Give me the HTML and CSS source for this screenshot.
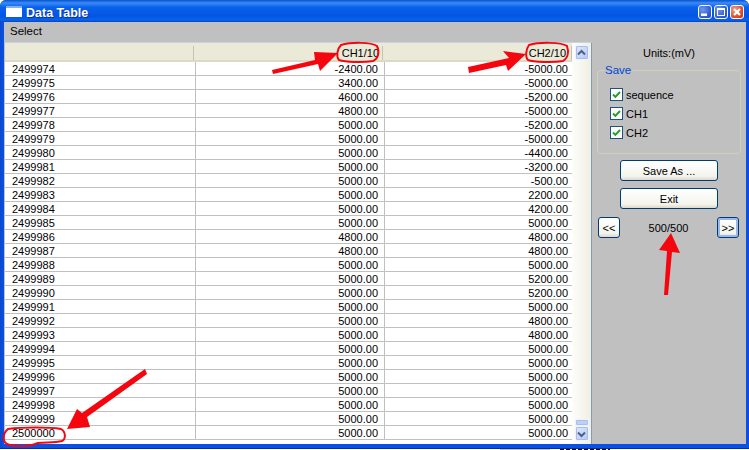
FILE: index.html
```html
<!DOCTYPE html>
<html lang="en">
<head>
<meta charset="utf-8">
<title>Data Table</title>
<link rel="stylesheet" href="styles.css">
</head>
<body>
<div class="window">
  <div class="titlebar">
    <svg class="appicon" width="16" height="11" viewBox="0 0 16 11"><rect x="0" y="0" width="16" height="11" fill="#fff"/><rect x="0" y="0" width="16" height="2" fill="#7fb0f0"/></svg>
    <span class="title">Data Table</span>
    <div class="winbtns">
      <span class="winbtn"><svg width="14" height="14" viewBox="0 0 14 14"><rect x="3" y="8.5" width="6" height="2.5" fill="#fff"/></svg></span>
      <span class="winbtn"><svg width="14" height="14" viewBox="0 0 14 14"><rect x="3.5" y="3.5" width="7" height="7" fill="none" stroke="#fff"/><rect x="3" y="3" width="8" height="2" fill="#fff"/></svg></span>
      <span class="winbtn close"><svg width="14" height="14" viewBox="0 0 14 14"><path d="M4 4l6 6M10 4l-6 6" stroke="#fff" stroke-width="2.2"/></svg></span>
    </div>
  </div>
  <div class="client">
    <div class="menubar">Select</div>
    <div class="main">
      <div class="tablewrap">
        <div class="grid" id="grid">
          <div class="head">
            <div class="hcell c1"></div>
            <div class="hcell c2">CH1/10</div>
            <div class="hcell c3">CH2/10</div>
          </div>
          <div class="row"><div class="c1">2499974</div><div class="c2">-2400.00</div><div class="c3">-5000.00</div></div>
          <div class="row"><div class="c1">2499975</div><div class="c2">3400.00</div><div class="c3">-5000.00</div></div>
          <div class="row"><div class="c1">2499976</div><div class="c2">4600.00</div><div class="c3">-5200.00</div></div>
          <div class="row"><div class="c1">2499977</div><div class="c2">4800.00</div><div class="c3">-5000.00</div></div>
          <div class="row"><div class="c1">2499978</div><div class="c2">5000.00</div><div class="c3">-5200.00</div></div>
          <div class="row"><div class="c1">2499979</div><div class="c2">5000.00</div><div class="c3">-5000.00</div></div>
          <div class="row"><div class="c1">2499980</div><div class="c2">5000.00</div><div class="c3">-4400.00</div></div>
          <div class="row"><div class="c1">2499981</div><div class="c2">5000.00</div><div class="c3">-3200.00</div></div>
          <div class="row"><div class="c1">2499982</div><div class="c2">5000.00</div><div class="c3">-500.00</div></div>
          <div class="row"><div class="c1">2499983</div><div class="c2">5000.00</div><div class="c3">2200.00</div></div>
          <div class="row"><div class="c1">2499984</div><div class="c2">5000.00</div><div class="c3">4200.00</div></div>
          <div class="row"><div class="c1">2499985</div><div class="c2">5000.00</div><div class="c3">5000.00</div></div>
          <div class="row"><div class="c1">2499986</div><div class="c2">4800.00</div><div class="c3">4800.00</div></div>
          <div class="row"><div class="c1">2499987</div><div class="c2">4800.00</div><div class="c3">4800.00</div></div>
          <div class="row"><div class="c1">2499988</div><div class="c2">5000.00</div><div class="c3">5000.00</div></div>
          <div class="row"><div class="c1">2499989</div><div class="c2">5000.00</div><div class="c3">5200.00</div></div>
          <div class="row"><div class="c1">2499990</div><div class="c2">5000.00</div><div class="c3">5200.00</div></div>
          <div class="row"><div class="c1">2499991</div><div class="c2">5000.00</div><div class="c3">5000.00</div></div>
          <div class="row"><div class="c1">2499992</div><div class="c2">5000.00</div><div class="c3">4800.00</div></div>
          <div class="row"><div class="c1">2499993</div><div class="c2">5000.00</div><div class="c3">4800.00</div></div>
          <div class="row"><div class="c1">2499994</div><div class="c2">5000.00</div><div class="c3">5000.00</div></div>
          <div class="row"><div class="c1">2499995</div><div class="c2">5000.00</div><div class="c3">5000.00</div></div>
          <div class="row"><div class="c1">2499996</div><div class="c2">5000.00</div><div class="c3">5000.00</div></div>
          <div class="row"><div class="c1">2499997</div><div class="c2">5000.00</div><div class="c3">5000.00</div></div>
          <div class="row"><div class="c1">2499998</div><div class="c2">5000.00</div><div class="c3">5000.00</div></div>
          <div class="row"><div class="c1">2499999</div><div class="c2">5000.00</div><div class="c3">5000.00</div></div>
          <div class="row"><div class="c1">2500000</div><div class="c2">5000.00</div><div class="c3">5000.00</div></div>
        </div>
        <div class="scrollbar">
          <span class="sbtn"><svg width="13" height="14" viewBox="0 0 13 14"><path d="M3 8.5L6.500 5 10 8.500" fill="none" stroke="#4d6185" stroke-width="2"/></svg></span>
          <span class="strack"></span>
          <span class="sthumb"></span>
          <span class="sbtn"><svg width="13" height="14" viewBox="0 0 13 14"><path d="M3 5.500L6.500 9 10 5.500" fill="none" stroke="#4d6185" stroke-width="2"/></svg></span>
        </div>
      </div>
      <div class="side">
        <div class="units">Units:(mV)</div>
        <fieldset class="group">
          <legend>Save</legend>
          <label class="check"><svg width="13" height="13" viewBox="0 0 13 13"><rect x="0.5" y="0.5" width="12" height="12" fill="#fff" stroke="#1c5180"/><path d="M3 6.5l2.400 2.400L10 4" fill="none" stroke="#21a121" stroke-width="2"/></svg>sequence</label>
          <label class="check"><svg width="13" height="13" viewBox="0 0 13 13"><rect x="0.5" y="0.5" width="12" height="12" fill="#fff" stroke="#1c5180"/><path d="M3 6.5l2.400 2.400L10 4" fill="none" stroke="#21a121" stroke-width="2"/></svg>CH1</label>
          <label class="check"><svg width="13" height="13" viewBox="0 0 13 13"><rect x="0.5" y="0.5" width="12" height="12" fill="#fff" stroke="#1c5180"/><path d="M3 6.5l2.400 2.400L10 4" fill="none" stroke="#21a121" stroke-width="2"/></svg>CH2</label>
        </fieldset>
        <button class="btn wide first">Save As ...</button>
        <button class="btn wide">Exit</button>
        <div class="pager">
          <button class="btn small">&lt;&lt;</button>
          <span class="pagetext">500/500</span>
          <button class="btn small focus">&gt;&gt;</button>
        </div>
      </div>
    </div>
  </div>
</div>
<div class="desk"><span class="deskbox"></span><span class="desktext"></span></div>
<svg class="marks" width="749" height="450" viewBox="0 0 749 450">
  <g fill="none" stroke="#f5060f" stroke-width="2">
    <path d="M341 45c10-3 30-3 36 1 3 6 1 13-4 15-10 2-28 1-34-1-3-3-2-11 2-15z"/>
    <path d="M529 45c10-3 32-3 38 1 2 6 1 12-4 15-10 2-30 1-35-1-3-3-2-11 1-15z"/>
    <path d="M8 429c14-2 42-2 53 0 5 3 5 10 1 12-8 2-15 1-24 2-9 4-24 4-31 1-5-3-4-11 1-15z"/>
  </g>
  <g fill="#f5060f">
    <path d="M272 70l43-10-1-8 24 1-18 18-2-7-45 10z" />
    <path d="M468 67l41-9-6-7 23 3-18 17-2-6-37 8z" />
    <path d="M664 295l3-44-8-1 12-17 9 20-8-1-4 43z"/>
    <path d="M147 374l-60 43 3 10-23 2 10-20 5 4 63-44z"/>
  </g>
</svg>
</body>
</html>
```
FILE: styles.css
```css
* { box-sizing: border-box; }
html, body { margin: 0; padding: 0; }
body {
  width: 749px;
  height: 450px;
  overflow: hidden;
  background: #fff;
  font-family: "Liberation Sans", Arial, sans-serif;
  font-size: 11px;
  color: #000;
  position: relative;
}
.window {
  width: 749px;
  height: 449px;
  display: flex;
  flex-direction: column;
  background: linear-gradient(90deg, #0a4ad0, #0a50e4 4px);
  border-radius: 6px 6px 0 0;
  padding: 0 3px 4px 4px;
  border-bottom: 1px solid #0030a8;
}
.titlebar {
  height: 22px;
  flex: none;
  margin: 0 -3px 0 -4px;
  padding: 2px 5px 0 6px;
  display: flex;
  align-items: center;
  gap: 4px;
  border-radius: 6px 6px 0 0;
  background: linear-gradient(#0a52d0 0, #3a8cf6 3px, #0a62ea 7px, #0255e4 16px, #0a62ea 20px, #0344c8 22px);
  color: #fff;
}
.appicon { margin-top: -1px; }
.title {
  font-weight: bold;
  font-size: 12.5px;
  padding-top: 1px;
  text-shadow: 1px 1px 0 #0a2f9a;
}
.winbtns { margin-left: auto; display: flex; gap: 2px; margin-right: 0; margin-top: -1px; }
.winbtn {
  width: 14px;
  height: 14px;
  display: block;
  border: 1px solid #fff;
  border-radius: 3px;
  background: radial-gradient(circle at 30% 30%, #7096ee, #2a55d0 75%);
}
.winbtn svg { display: block; margin: -1px; }
.winbtn.close { background: radial-gradient(circle at 30% 30%, #f0a080, #d8401c 75%); }
.client {
  flex: 1;
  min-height: 0;
  display: flex;
  flex-direction: column;
  background: #c0c0c0;
}
.menubar {
  height: 20px;
  flex: none;
  padding: 2px 0 0 6px;
  font-size: 11.500px;
  line-height: 14px;
}
.main { flex: 1; min-height: 0; display: flex; }
.tablewrap {
  width: 587px;
  flex: none;
  margin-left: 1px;
  height: 402px;
  display: flex;
  border-right: 1px solid #7f9db9;
  border-top: 1px solid #c8d4e4;
  background: #fff;
}
.grid { width: 567px; flex: none; overflow: hidden; }
.head {
  display: flex;
  height: 19px;
  background: #ebe9d8;
  border-bottom: 2px solid #dcd9c6;
}
.hcell {
  height: 14px;
  margin-top: 3px;
  line-height: 15px;
  text-align: right;
  border-right: 1px solid #c4c2b0;
}
.hcell.c1 { width: 189px; flex: none; margin-right: 2px; padding: 0; }
.hcell.c2 { width: 187px; flex: none; margin-right: 2px; padding-right: 3px; }
.hcell.c3 { flex: 1; padding-right: 5px; }
.c1 { width: 191px; flex: none; text-align: left; padding-left: 7px; }
.c2 { width: 189px; flex: none; text-align: right; padding-right: 6px; }
.c3 { flex: 1; text-align: right; padding-right: 4px; }
.row {
  display: flex;
  height: 14px;
  line-height: 15px;
  border-bottom: 1px solid #c0c0c0;
  font-size: 11px;
}
.row .c1, .row .c2 { border-right: 1px solid #c0c0c0; }
.scrollbar {
  flex: 1;
  display: flex;
  flex-direction: column;
  background: linear-gradient(90deg, #fdfdfa, #f1efe2);
  padding: 2px 2px 3px 3px;
}
.sbtn {
  height: 15px;
  flex: none;
  background: linear-gradient(135deg, #e0e9fd, #b3c8f6);
  border: 1px solid #eef3fd;
  border-radius: 2px;
  box-shadow: 0 0 0 1px #a8bdea inset;
}
.sbtn svg { display: block; margin: 0 auto; margin-left: -1px; }
.strack { flex: 1; }
.sthumb {
  height: 7px;
  flex: none;
  background: #bcd0f8;
  border: 1px solid #eef3fd;
  border-radius: 2px;
  box-shadow: 0 0 0 1px #a8bdea inset;
}
.side {
  flex: 1;
  display: flex;
  flex-direction: column;
  align-items: center;
  padding: 4px 5px 0 5px;
  font-size: 11px;
}
.units { height: 18px; line-height: 15px; text-align: center; flex: none; }
.group {
  width: 100%;
  height: 90px;
  flex: none;
  margin: 0;
  padding: 12px 0 0 12px;
  border: 1px solid #d0d0bf;
  border-radius: 4px;
  display: flex;
  flex-direction: column;
  gap: 6px;
}
.group legend { color: #0046d5; padding: 0 1px; margin-left: -6px; line-height: 12px; font-size: 11.5px; }
.check { display: flex; align-items: center; gap: 3px; height: 13px; }
.check svg { flex: none; }
.btn {
  font: 11px "Liberation Sans", Arial, sans-serif;
  color: #000;
  padding: 0;
  border: 1px solid #003c74;
  border-radius: 3px;
  background: linear-gradient(#fff, #f4f4ee 80%, #dcd8cc);
}
.wide { width: 98px; height: 21px; flex: none; margin-top: 7px; }
.wide.first { margin-top: 6px; }
.pager {
  width: 100%;
  display: flex;
  align-items: center;
  justify-content: space-between;
  margin-top: 8px;
  height: 21px;
  padding: 0 2px 0 1px;
}
.small { width: 22px; height: 21px; }
.focus { box-shadow: inset 0 0 0 2px #9ab8ee; }
.pagetext { text-align: center; }
.desk { height: 1px; display: flex; padding-left: 500px; gap: 10px; }
.deskbox { width: 50px; background: #c0c0c0; }
.desktext { width: 50px; background: repeating-linear-gradient(90deg, #000 0 4px, #fff 4px 6px); }
.marks { position: absolute; left: 0; top: 0; pointer-events: none; }
```
